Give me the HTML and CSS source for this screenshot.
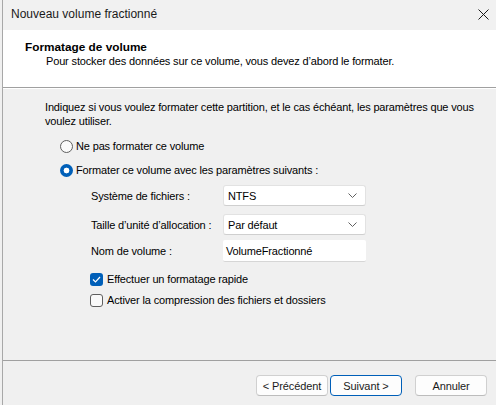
FILE: index.html
```html
<!DOCTYPE html>
<html lang="fr">
<head>
<meta charset="utf-8">
<link rel="stylesheet" href="styles.css">
</head>
<body>
<div class="window">
  <div class="titlebar">
    <span class="title">Nouveau volume fractionné</span>
    <svg class="close" width="11" height="11" viewBox="0 0 11 11"><path d="M0.5 0.5 L10.5 10.5 M10.5 0.5 L0.5 10.5" stroke="#1a1a1a" stroke-width="1" fill="none"/></svg>
  </div>
  <div class="header">
    <div class="h-title">Formatage de volume</div>
    <div class="h-sub">Pour stocker des données sur ce volume, vous devez d’abord le formater.</div>
  </div>
  <div class="content">
    <p class="intro">Indiquez si vous voulez formater cette partition, et le cas échéant, les paramètres que vous<br>voulez utiliser.</p>
    <div class="option first"><span class="radio"></span><span>Ne pas formater ce volume</span></div>
    <div class="option"><span class="radio checked"></span><span>Formater ce volume avec les paramètres suivants :</span></div>
    <div class="fields">
      <div class="field"><span class="label">Système de fichiers :</span><div class="select"><span>NTFS</span><svg width="9" height="5" viewBox="0 0 9 5"><path d="M0.5 0.5 L4.5 4.5 L8.5 0.5" stroke="#606060" fill="none"/></svg></div></div>
      <div class="field"><span class="label">Taille d’unité d’allocation :</span><div class="select"><span>Par défaut</span><svg width="9" height="5" viewBox="0 0 9 5"><path d="M0.5 0.5 L4.5 4.5 L8.5 0.5" stroke="#606060" fill="none"/></svg></div></div>
      <div class="field name"><span class="label">Nom de volume :</span><div class="input">VolumeFractionné</div></div>
    </div>
    <div class="checks">
      <div class="check-row"><span class="check checked"><svg width="9" height="7" viewBox="0 0 9 7"><path d="M1 3.5 L3.5 6 L8 1" stroke="#fff" stroke-width="1.2" fill="none"/></svg></span><span>Effectuer un formatage rapide</span></div>
      <div class="check-row"><span class="check"></span><span>Activer la compression des fichiers et dossiers</span></div>
    </div>
  </div>
  <div class="footer">
    <button class="btn">&lt; Précédent</button>
    <button class="btn primary">Suivant &gt;</button>
    <button class="btn cancel">Annuler</button>
  </div>
</div>
</body>
</html>
```
FILE: styles.css
```css
html, body {
  margin: 0;
  padding: 0;
  background: #f0f0f0;
}
body {
  font-family: "Liberation Sans", Arial, sans-serif;
  font-size: 11px;
  letter-spacing: -0.15px;
  color: #000;
  width: 496px;
  height: 405px;
  overflow: hidden;
}
.window {
  height: 405px;
  margin-left: 2px;
  border-left: 1px solid #a8a8a8;
  display: flex;
  flex-direction: column;
  background: #f0f0f0;
}
.titlebar {
  height: 30px;
  flex: none;
  display: flex;
  align-items: center;
  justify-content: space-between;
  padding: 0 7px 0 8px;
  background: #f1f1f1;
  color: #1a1a1a;
  font-size: 12px;
  letter-spacing: 0;
}
.title {
  margin-top: -2px;
}
.close {
  margin-top: -1px;
}
.header {
  height: 58px;
  flex: none;
  box-sizing: border-box;
  background: #fff;
  border-bottom: 1px solid #a0a0a0;
  box-shadow: 0 1px 0 #fff;
  padding: 10px 0 0 22px;
}
.h-title {
  font-weight: bold;
  font-size: 11.8px;
  letter-spacing: 0;
  line-height: 14px;
}
.h-sub {
  padding-left: 21px;
  line-height: 14px;
}
.content {
  flex: 1;
  padding: 12px 0 0 42px;
}
.intro {
  margin: 0;
  line-height: 14px;
  white-space: nowrap;
}
.option {
  display: flex;
  align-items: center;
  gap: 3px;
  height: 24px;
  margin-left: 15px;
  white-space: nowrap;
}
.option.first {
  margin-top: 6px;
}
.radio {
  width: 11px;
  height: 11px;
  border: 1px solid #5f5f5f;
  border-radius: 50%;
  background: #fafafa;
}
.radio.checked {
  width: 13px;
  height: 13px;
  border: none;
  background: radial-gradient(circle, #fff 0 2.6px, #005fb8 3.2px);
}
.fields {
  margin-left: 46px;
  margin-top: 3px;
  display: flex;
  flex-direction: column;
  gap: 8px;
}
.field {
  display: flex;
  align-items: center;
  height: 21px;
  white-space: nowrap;
}
.field.name {
  height: 22px;
  margin-top: -3px;
}
.label {
  width: 132px;
}
.select, .input {
  width: 143px;
  height: 21px;
  box-sizing: border-box;
  background: #fff;
  border: 1px solid #e2e2e2;
  border-bottom-color: #cfcfcf;
  border-radius: 3px;
  display: flex;
  align-items: center;
  justify-content: space-between;
  padding: 0 8px 0 4px;
}
.input {
  height: 22px;
  border: none;
  border-bottom: 1px solid #d6d6d6;
  border-radius: 2px;
  padding-left: 3px;
}
.checks {
  margin-left: 45px;
  margin-top: 9px;
  display: flex;
  flex-direction: column;
  gap: 5px;
}
.check-row {
  display: flex;
  align-items: center;
  gap: 4px;
  height: 16px;
  white-space: nowrap;
}
.check {
  width: 11px;
  height: 11px;
  border: 1px solid #5f5f5f;
  border-radius: 3px;
  background: #fafafa;
  display: flex;
  align-items: center;
  justify-content: center;
}
.check.checked {
  width: 13px;
  height: 13px;
  border: none;
  background: #005fb8;
}
.footer {
  height: 45px;
  flex: none;
  border-top: 1px solid #a0a0a0;
  display: flex;
  align-items: flex-start;
  padding: 14px 0 0 253px;
  box-sizing: border-box;
}
.btn {
  font-family: inherit;
  font-size: 11px;
  letter-spacing: -0.1px;
  width: 72px;
  height: 21px;
  padding: 0;
  background: #fdfdfd;
  border: 1px solid #d0d0d0;
  border-bottom-color: #bcbcbc;
  border-radius: 4px;
  color: #1a1a1a;
  margin-right: 2px;
}
.btn.primary {
  border: 1px solid #005fb8;
}
.btn.cancel {
  margin-left: 11px;
}
```
